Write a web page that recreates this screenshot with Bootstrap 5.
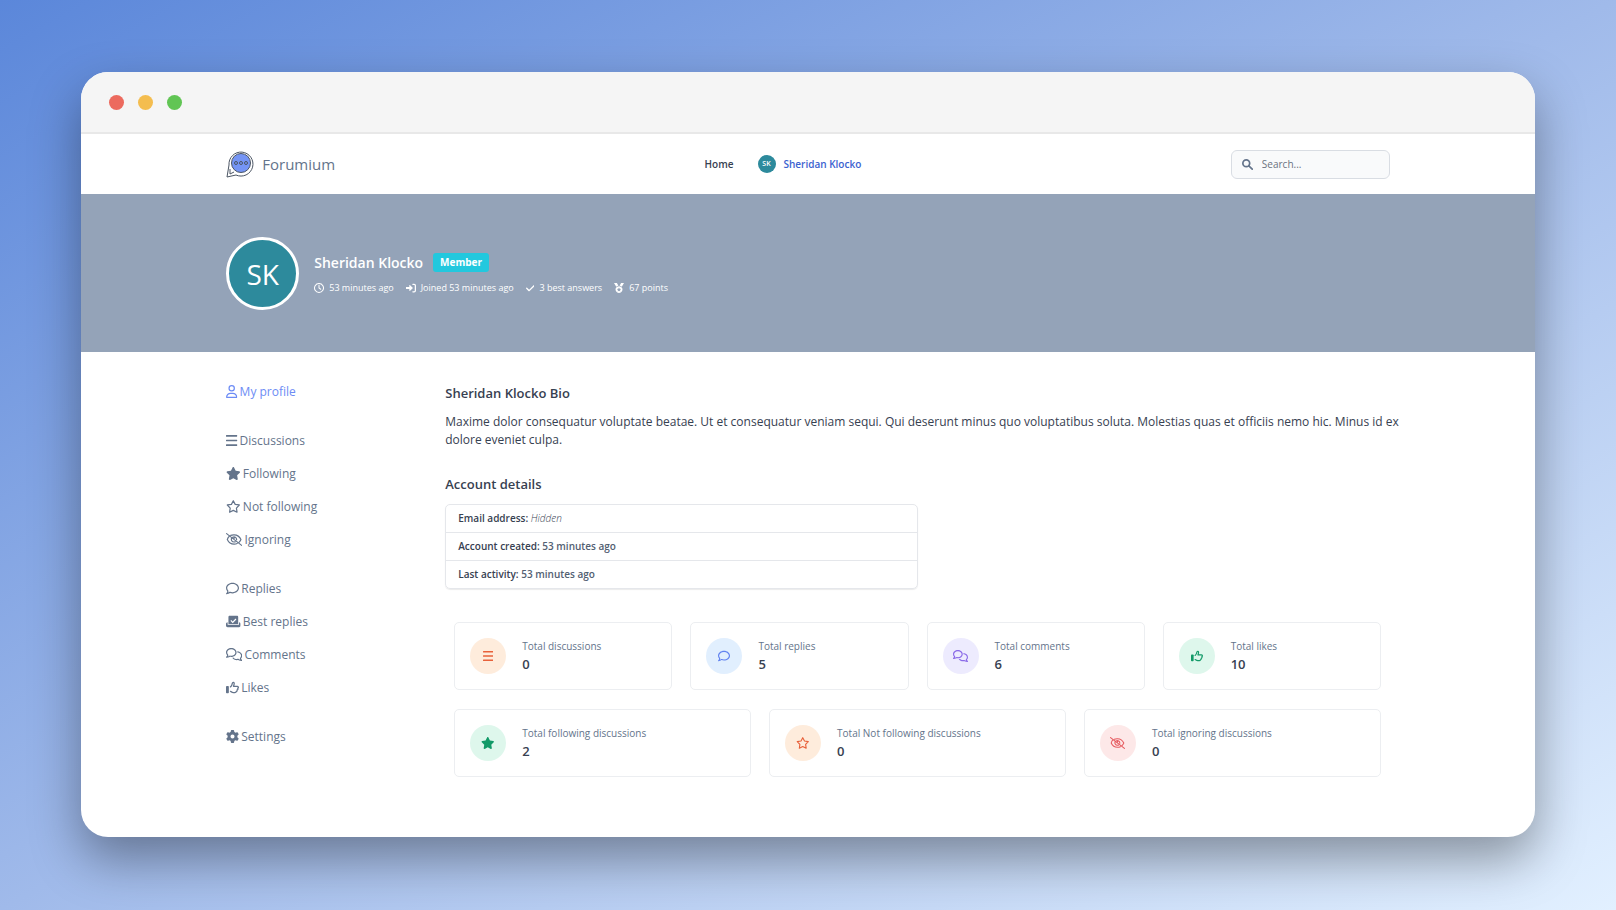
<!DOCTYPE html>
<html lang="en">
<head>
<meta charset="utf-8">
<meta name="viewport" content="width=device-width, initial-scale=1">
<title>Forumium - Sheridan Klocko</title>
<link href="https://cdn.jsdelivr.net/npm/bootstrap@5.3.0/dist/css/bootstrap.min.css" rel="stylesheet">
<style>
  :root { --slate: #64748b; --ink: #374151; --line: #e5e7eb; --teal: #2d8a9c; }
  body {
    font-family: "Open Sans", "Noto Sans", sans-serif;
    font-size: 12px; line-height: 18px; color: var(--ink);
    padding: 72px 5% 73px;
    background: linear-gradient(to bottom right, #5b87da 0%, #a0baea 50%, #e2f0ff 100%) no-repeat;
  }
  .app-window { border-radius: 27px; box-shadow: 0 22px 50px rgba(0, 0, 0, .37); }
  .title-bar { height: 62px; padding: 1px 28px 0; gap: 14px; background: #f5f5f5; border-bottom: 2px solid #e8e8e8; }
  .dot { width: 15px; height: 15px; }
  .dot-red { background: #ec6a5e; } .dot-amber { background: #f4bd4f; } .dot-green { background: #61c554; }
  .inset { padding-left: 10%; padding-right: 10%; }
  .top-nav { height: 60px; }
  .brand { font-size: 15px; font-weight: 500; color: var(--slate); gap: 8px; }
  .brand:hover { color: var(--slate); }
  .menu-link { font-size: 10px; font-weight: 600; color: var(--ink); }
  .menu-link.active { color: #3b62d0; }
  .avatar { background: var(--teal); color: #fff; }
  .avatar-sm { width: 18px; height: 18px; font-size: 7px; }
  .avatar-lg { width: 73px; height: 73px; border: 3px solid #fff; font-size: 28px; }
  .search-box { width: 159px; height: 29px; padding: 0 10px; gap: 9px; background: #f9fafb; border: 1px solid #d9dde3; border-radius: 6px; color: var(--slate); }
  .search-box input { font-size: 10px; color: var(--slate); min-width: 0; outline: 0; }
  .search-box input::placeholder { color: #6b7280; opacity: 1; }
  .hero { background: #94a3b8; color: #fff; padding-top: 43px; padding-bottom: 42px; gap: 15px; }
  .hero-name { gap: 10px; }
  .hero h1 { font-size: 14px; line-height: 20px; font-weight: 600; }
  .role { font-size: 10px; line-height: 19px; font-weight: 700; background: #22c8de; padding: 0 7px; border-radius: 3px; }
  .meta { font-size: 9px; line-height: 14px; gap: 12px; }
  .meta li { gap: 5px; }
  .ico { height: 13px; width: auto; fill: currentColor; flex: none; }
  .ico-sm { height: 10px; }
  .ico-md { height: 12px; }
  .side { width: 219px; gap: 16px; }
  .side a { height: 33px; gap: 2px; color: var(--slate); }
  .side a.active { color: #6d8cf5; }
  .body-area { padding-top: 23px; padding-bottom: 54px; }
  .section-title { font-size: 13px; line-height: 20px; font-weight: 600; margin-bottom: 10px; }
  .bio { margin: 0 -16px 25px 0; }
  .details { font-size: 10px; font-weight: 600; margin-bottom: 25px; border: 1px solid var(--line); border-radius: 5px; box-shadow: 0 1px 1px rgba(0,0,0,.08); }
  .details td { padding: 5px 12px; border-bottom: 1px solid var(--line); line-height: 17px; }
  .details tr:last-child td { border-bottom: 0; }
  .details span { color: #526072; }
  .details em { font-weight: 300; }
  .stats { padding: 0 9px; gap: 19px; }
  .stat-row { gap: 18px; }
  .stat { flex: 1 1 0; gap: 16px; padding: 15px; height: 68px; border: 1px solid #eceef1; border-radius: 5px; }
  .stat-name { font-size: 10px; line-height: 16px; color: var(--slate); }
  .stat-num { font-size: 13px; line-height: 20px; font-weight: 600; }
  .bubble { width: 36px; height: 36px; flex: none; }
  .b-orange { background: #feecdc; color: #e8613a; }
  .b-blue { background: #e1effe; color: #6283f0; }
  .b-purple { background: #edebfe; color: #8b6be8; }
  .b-green { background: #def7ec; color: #129a68; }
  .b-red { background: #fde8e8; color: #e65a5f; }
</style>
</head>
<body class="min-vh-100 d-flex flex-column">
<svg class="d-none" xmlns="http://www.w3.org/2000/svg">
  <symbol id="i-user" viewBox="0 0 448 512"><path d="M304 128a80 80 0 1 0-160 0 80 80 0 1 0 160 0zM96 128a128 128 0 1 1 256 0A128 128 0 1 1 96 128zM49.3 464l349.5 0c-8.900-63.300-63.300-112-129-112l-91.400 0c-65.700 0-120.100 48.700-129 112zM0 482.300C0 383.800 79.800 304 178.300 304l91.400 0C368.200 304 448 383.800 448 482.300c0 16.400-13.300 29.700-29.700 29.700L29.700 512C13.300 512 0 498.700 0 482.300z"/></symbol>
  <symbol id="i-bars" viewBox="0 0 448 512"><path d="M24 72H424M24 256H424M24 440H424" fill="none" stroke="currentColor" stroke-width="64" stroke-linecap="round"/></symbol>
  <symbol id="i-star" viewBox="0 0 576 512"><path d="M316.9 18C311.6 7 300.4 0 288.1 0s-23.400 7-28.800 18L195 150.300 51.400 171.500c-12 1.800-22 10.200-25.700 21.700s-.7 24.200 7.900 32.700L137.800 329 113.200 474.700c-2 12 3 24.200 12.900 31.300s23 8 33.800 2.300l128.300-68.500 128.300 68.500c10.800 5.700 23.900 4.900 33.800-2.300s14.900-19.300 12.900-31.300L438.500 329 542.700 225.900c8.600-8.500 11.700-21.200 7.900-32.700s-13.700-19.900-25.700-21.700L381.200 150.300 316.900 18z"/></symbol>
  <symbol id="i-star-o" viewBox="0 0 576 512"><path d="M288 30L362 172 524 196 410 318 434 480 288 408 142 480 166 318 52 196 214 172Z" fill="none" stroke="currentColor" stroke-width="48" stroke-linejoin="round"/></symbol>
  <symbol id="i-eye" viewBox="0 0 640 512"><path d="M24 24L616 488M140 115C95 150 65 200 52 256C100 365 200 440 320 440C365 440 405 430 442 412M185 92C225 76 270 70 320 72C440 75 540 150 588 256C574 295 550 330 520 360M225 190C185 270 230 355 320 355C335 355 350 352 360 348M262 165C340 125 420 180 418 262M320 160C335 205 310 225 290 230" fill="none" stroke="currentColor" stroke-width="46" stroke-linecap="round"/></symbol>
  <symbol id="i-comment" viewBox="0 0 512 512"><path d="M123.6 391.3c12.900-9.400 29.600-11.800 44.600-6.400c26.500 9.600 56.200 15.100 87.800 15.100c124.700 0 208-80.500 208-160s-83.300-160-208-160S48 160.500 48 240c0 32 12.400 62.800 35.700 89.200c8.600 9.700 12.800 22.500 11.800 35.500c-1.400 18.100-5.700 34.700-11.300 49.400c17-7.900 31.100-16.700 39.400-22.700zM21.200 431.900c1.800-2.700 3.500-5.400 5.100-8.100c10-16.600 19.500-38.400 21.400-62.900C17.700 326.800 0 285.100 0 240C0 125.100 114.600 32 256 32s256 93.100 256 208s-114.600 208-256 208c-37.100 0-72.300-6.400-104.100-17.900c-11.900 8.700-31.300 20.600-54.300 30.600c-24 10-52 19.300-81.700 19.300c-6.500 0-12.300-3.900-14.800-9.900c-2.500-6-1.100-12.800 3.400-17.400c6-6 11-13 16.700-20.800z"/></symbol>
  <symbol id="i-comments" viewBox="0 0 640 512"><path d="M88.2 309.1c9.800-18.300 6.800-40.800-7.500-55.800C59.400 230.900 48 204 48 176c0-63.500 63.800-128 160-128s160 64.500 160 128s-63.800 128-160 128c-13.100 0-25.800-1.300-37.800-3.600c-10.400-2-21.200-.6-30.700 4.200c-4.100 2.100-8.300 4.100-12.600 6c-16 7.200-32.900 13.500-49.900 18c2.800-4.600 5.400-9.100 7.900-13.600c1.100-1.900 2.200-3.900 3.200-5.900zM208 352c114.900 0 208-78.800 208-176S322.900 0 208 0S0 78.800 0 176c0 41.800 17.200 80.100 45.900 110.300c-.9 1.700-1.900 3.500-2.800 5.100c-10.300 18.400-22.300 36.500-36.600 52.100c-6.600 7-8.300 17.200-4.600 25.900C5.800 378.300 14.400 384 24 384c43 0 86.500-13.300 122.700-29.700c4.800-2.200 9.600-4.500 14.200-6.800c15.100 3 30.900 4.500 47.100 4.500zM432 480c16.200 0 31.900-1.600 47.100-4.500c4.600 2.300 9.400 4.600 14.200 6.800C529.500 498.700 573 512 616 512c9.600 0 18.200-5.700 22-14.500c3.800-8.800 2-19-4.600-25.900c-14.200-15.600-26.200-33.700-36.600-52.100c-.9-1.700-1.900-3.400-2.800-5.100C622.800 384.100 640 345.800 640 304c0-94.400-87.900-171.500-198.200-175.800c4.100 15.200 6.200 31.200 6.200 47.800l0 .6c87.200 6.700 144 67.500 144 127.400c0 28-11.400 54.900-32.700 77.200c-14.300 15-17.300 37.600-7.500 55.800c1.100 2 2.200 4 3.200 5.900c2.500 4.500 5.200 9 7.900 13.600c-17-4.500-33.900-10.700-49.900-18c-4.300-1.900-8.500-3.900-12.600-6c-9.500-4.800-20.300-6.200-30.700-4.200c-12.100 2.400-24.700 3.600-37.800 3.600c-61.700 0-110-26.500-136.800-62.300c-16 5.400-32.800 9.400-50 11.800C279 439.800 350 480 432 480z"/></symbol>
  <symbol id="i-best" viewBox="0 0 576 512"><path fill-rule="evenodd" d="M96 80c0-26 22-48 48-48H432c26 0 48 22 48 48V352H96ZM409 175L375 141 264 252 209 197 175 231 264 320ZM64 288V384H512V288c36 0 64 28 64 64v64c0 36-28 64-64 64H64C28 480 0 452 0 416V352c0-36 28-64 64-64Z"/></symbol>
  <symbol id="i-like" viewBox="0 0 512 512"><rect y="192" width="112" height="288" rx="32"/><path d="M176 232C225 200 240 150 248 95C256 45 315 40 322 90C325 130 310 165 296 208H440C492 208 502 262 462 284C480 325 462 350 436 354C444 390 425 410 402 414C400 446 376 456 350 456H290C245 456 215 430 176 406" fill="none" stroke="currentColor" stroke-width="50" stroke-linecap="round" stroke-linejoin="round"/></symbol>
  <symbol id="i-gear" viewBox="0 0 512 512"><path d="M495.9 166.6c3.200 8.700 .5 18.400-6.400 24.600l-43.300 39.400c1.100 8.300 1.700 16.800 1.700 25.400s-.6 17.100-1.700 25.400l43.300 39.400c6.900 6.200 9.600 15.900 6.400 24.600c-4.400 11.900-9.700 23.300-15.800 34.300l-4.700 8.100c-6.600 11-14 21.400-22.100 31.200c-5.900 7.200-15.700 9.600-24.500 6.800l-55.700-17.700c-13.400 10.300-28.200 18.900-44 25.400l-12.500 57.100c-2 9.100-9 16.300-18.200 17.800c-13.800 2.300-28 3.500-42.500 3.500s-28.700-1.200-42.500-3.500c-9.200-1.500-16.200-8.700-18.200-17.800l-12.500-57.100c-15.800-6.500-30.600-15.100-44-25.400L83.100 425.900c-8.800 2.800-18.600 .3-24.500-6.800c-8.100-9.800-15.500-20.200-22.100-31.200l-4.700-8.100c-6.100-11-11.400-22.400-15.800-34.300c-3.200-8.700-.5-18.400 6.400-24.600l43.300-39.400C64.600 273.100 64 264.600 64 256s.6-17.100 1.700-25.400L22.400 191.200c-6.900-6.200-9.600-15.900-6.400-24.600c4.400-11.900 9.700-23.300 15.800-34.300l4.700-8.100c6.600-11 14-21.400 22.100-31.200c5.900-7.200 15.700-9.600 24.500-6.800l55.700 17.700c13.400-10.300 28.200-18.900 44-25.400l12.500-57.100c2-9.100 9-16.300 18.200-17.800C227.300 1.200 241.500 0 256 0s28.700 1.200 42.500 3.500c9.200 1.500 16.200 8.700 18.200 17.800l12.500 57.100c15.800 6.500 30.600 15.100 44 25.400l55.700-17.700c8.800-2.800 18.600-.3 24.500 6.800c8.100 9.800 15.500 20.200 22.100 31.200l4.700 8.100c6.100 11 11.400 22.400 15.800 34.300zM256 336a80 80 0 1 0 0-160 80 80 0 1 0 0 160z"/></symbol>
  <symbol id="i-clock" viewBox="0 0 512 512"><path d="M256 28a228 228 0 1 0 1 0M256 120V256L345 318" fill="none" stroke="currentColor" stroke-width="52" stroke-linecap="round"/></symbol>
  <symbol id="i-join" viewBox="0 0 512 512"><path d="M0 208H170V128C170 100 195 95 212 112L345 240C353 250 353 262 345 272L212 400C195 417 170 410 170 384V304H0Z"/><path d="M352 64H416a64 64 0 0 1 64 64V384a64 64 0 0 1-64 64H352" fill="none" stroke="currentColor" stroke-width="64" stroke-linecap="round"/></symbol>
  <symbol id="i-check" viewBox="0 0 448 512"><path d="M36 270L160 392L412 136" fill="none" stroke="currentColor" stroke-width="68" stroke-linecap="round" stroke-linejoin="round"/></symbol>
  <symbol id="i-medal" viewBox="0 0 512 512"><path fill-rule="evenodd" d="M0 0H150L225 135C185 142 145 160 115 190ZM512 0H362L287 135C327 142 367 160 397 190ZM256 160a176 176 0 1 0 1 0ZM256 225L290 295 365 305 310 358 323 432 256 397 189 432 202 358 147 305 222 295Z"/></symbol>
</svg>

<div class="app-window flex-grow-1 bg-white overflow-hidden">
  <div class="title-bar d-flex align-items-center">
    <span class="dot dot-red rounded-circle"></span>
    <span class="dot dot-amber rounded-circle"></span>
    <span class="dot dot-green rounded-circle"></span>
  </div>

  <header class="top-nav inset d-flex align-items-center justify-content-between">
    <a href="#" class="brand d-flex align-items-center text-decoration-none">
      <svg width="28" height="28" viewBox="0 0 28 28" fill="none" stroke="#4b5563" aria-hidden="true">
        <path d="M1 27L3 15A12 12 0 1 1 10 25Z" fill="#fff" stroke-linejoin="round"/>
        <path d="M4 19L4 24L8 22"/>
        <circle cx="15" cy="13" r="9.500" fill="#7595f5"/>
        <circle cx="10" cy="13" r="1.500"/><circle cx="15" cy="13" r="1.500"/><circle cx="20" cy="13" r="1.500"/>
      </svg>
      Forumium
    </a>
    <nav class="d-flex align-items-center gap-4">
      <a href="#" class="menu-link text-decoration-none">Home</a>
      <a href="#" class="menu-link active text-decoration-none d-flex align-items-center gap-2">
        <span class="avatar avatar-sm rounded-circle d-flex align-items-center justify-content-center">SK</span>
        Sheridan Klocko
      </a>
    </nav>
    <label class="search-box d-flex align-items-center">
      <svg width="13" height="13" viewBox="0 0 13 13" fill="none" stroke="currentColor" stroke-width="2" aria-hidden="true"><circle cx="5" cy="5" r="4"/><path d="M8 8L12 12" stroke-linecap="round"/></svg>
      <input type="search" class="border-0 bg-transparent p-0 w-100" placeholder="Search..." aria-label="Search">
    </label>
  </header>

  <section class="hero inset d-flex align-items-center">
    <div class="avatar avatar-lg rounded-circle d-flex align-items-center justify-content-center">SK</div>
    <div>
      <div class="hero-name d-flex align-items-center mb-2">
        <h1 class="m-0">Sheridan Klocko</h1>
        <span class="role">Member</span>
      </div>
      <ul class="meta list-unstyled d-flex m-0">
        <li class="d-flex align-items-center"><svg class="ico ico-sm" viewBox="0 0 512 512"><use href="#i-clock"/></svg>53 minutes ago</li>
        <li class="d-flex align-items-center"><svg class="ico ico-sm" viewBox="0 0 512 512"><use href="#i-join"/></svg>Joined 53 minutes ago</li>
        <li class="d-flex align-items-center"><svg class="ico ico-sm" viewBox="0 0 448 512"><use href="#i-check"/></svg>3 best answers</li>
        <li class="d-flex align-items-center"><svg class="ico ico-sm" viewBox="0 0 512 512"><use href="#i-medal"/></svg>67 points</li>
      </ul>
    </div>
  </section>

  <div class="body-area inset d-flex">
    <nav class="side d-flex flex-column flex-shrink-0" aria-label="Profile">
      <div>
        <a href="#" class="active d-flex align-items-center text-decoration-none"><svg class="ico" viewBox="0 0 448 512"><use href="#i-user"/></svg>My profile</a>
      </div>
      <div>
        <a href="#" class="d-flex align-items-center text-decoration-none"><svg class="ico" viewBox="0 0 448 512"><use href="#i-bars"/></svg>Discussions</a>
        <a href="#" class="d-flex align-items-center text-decoration-none"><svg class="ico" viewBox="0 0 576 512"><use href="#i-star"/></svg>Following</a>
        <a href="#" class="d-flex align-items-center text-decoration-none"><svg class="ico" viewBox="0 0 576 512"><use href="#i-star-o"/></svg>Not following</a>
        <a href="#" class="d-flex align-items-center text-decoration-none"><svg class="ico" viewBox="0 0 640 512"><use href="#i-eye"/></svg>Ignoring</a>
      </div>
      <div>
        <a href="#" class="d-flex align-items-center text-decoration-none"><svg class="ico" viewBox="0 0 512 512"><use href="#i-comment"/></svg>Replies</a>
        <a href="#" class="d-flex align-items-center text-decoration-none"><svg class="ico" viewBox="0 0 576 512"><use href="#i-best"/></svg>Best replies</a>
        <a href="#" class="d-flex align-items-center text-decoration-none"><svg class="ico" viewBox="0 0 640 512"><use href="#i-comments"/></svg>Comments</a>
        <a href="#" class="d-flex align-items-center text-decoration-none"><svg class="ico" viewBox="0 0 512 512"><use href="#i-like"/></svg>Likes</a>
      </div>
      <div>
        <a href="#" class="d-flex align-items-center text-decoration-none"><svg class="ico" viewBox="0 0 512 512"><use href="#i-gear"/></svg>Settings</a>
      </div>
    </nav>

    <main class="flex-grow-1 pt-2">
      <h2 class="section-title">Sheridan Klocko Bio</h2>
      <p class="bio">Maxime dolor consequatur voluptate beatae. Ut et consequatur veniam sequi. Qui deserunt minus quo voluptatibus soluta. Molestias quas et officiis nemo hic. Minus id ex dolore eveniet culpa.</p>
      <h2 class="section-title">Account details</h2>
      <div class="details w-50">
        <table class="w-100">
          <tbody>
            <tr><td>Email address: <em>Hidden</em></td></tr>
            <tr><td>Account created: <span>53 minutes ago</span></td></tr>
            <tr><td>Last activity: <span>53 minutes ago</span></td></tr>
          </tbody>
        </table>
      </div>

      <div class="stats d-flex flex-column pt-2">
        <div class="stat-row d-flex">
          <div class="stat d-flex align-items-center">
            <span class="bubble b-orange rounded-circle d-flex align-items-center justify-content-center"><svg class="ico ico-md" viewBox="0 0 448 512"><use href="#i-bars"/></svg></span>
            <div><div class="stat-name">Total discussions</div><div class="stat-num">0</div></div>
          </div>
          <div class="stat d-flex align-items-center">
            <span class="bubble b-blue rounded-circle d-flex align-items-center justify-content-center"><svg class="ico ico-md" viewBox="0 0 512 512"><use href="#i-comment"/></svg></span>
            <div><div class="stat-name">Total replies</div><div class="stat-num">5</div></div>
          </div>
          <div class="stat d-flex align-items-center">
            <span class="bubble b-purple rounded-circle d-flex align-items-center justify-content-center"><svg class="ico ico-md" viewBox="0 0 640 512"><use href="#i-comments"/></svg></span>
            <div><div class="stat-name">Total comments</div><div class="stat-num">6</div></div>
          </div>
          <div class="stat d-flex align-items-center">
            <span class="bubble b-green rounded-circle d-flex align-items-center justify-content-center"><svg class="ico ico-md" viewBox="0 0 512 512"><use href="#i-like"/></svg></span>
            <div><div class="stat-name">Total likes</div><div class="stat-num">10</div></div>
          </div>
        </div>
        <div class="stat-row d-flex">
          <div class="stat d-flex align-items-center">
            <span class="bubble b-green rounded-circle d-flex align-items-center justify-content-center"><svg class="ico ico-md" viewBox="0 0 576 512"><use href="#i-star"/></svg></span>
            <div><div class="stat-name">Total following discussions</div><div class="stat-num">2</div></div>
          </div>
          <div class="stat d-flex align-items-center">
            <span class="bubble b-orange rounded-circle d-flex align-items-center justify-content-center"><svg class="ico ico-md" viewBox="0 0 576 512"><use href="#i-star-o"/></svg></span>
            <div><div class="stat-name">Total Not following discussions</div><div class="stat-num">0</div></div>
          </div>
          <div class="stat d-flex align-items-center">
            <span class="bubble b-red rounded-circle d-flex align-items-center justify-content-center"><svg class="ico ico-md" viewBox="0 0 640 512"><use href="#i-eye"/></svg></span>
            <div><div class="stat-name">Total ignoring discussions</div><div class="stat-num">0</div></div>
          </div>
        </div>
      </div>
    </main>
  </div>
</div>
<script src="https://cdn.jsdelivr.net/npm/bootstrap@5.3.0/dist/js/bootstrap.bundle.min.js"></script>
</body>
</html>
